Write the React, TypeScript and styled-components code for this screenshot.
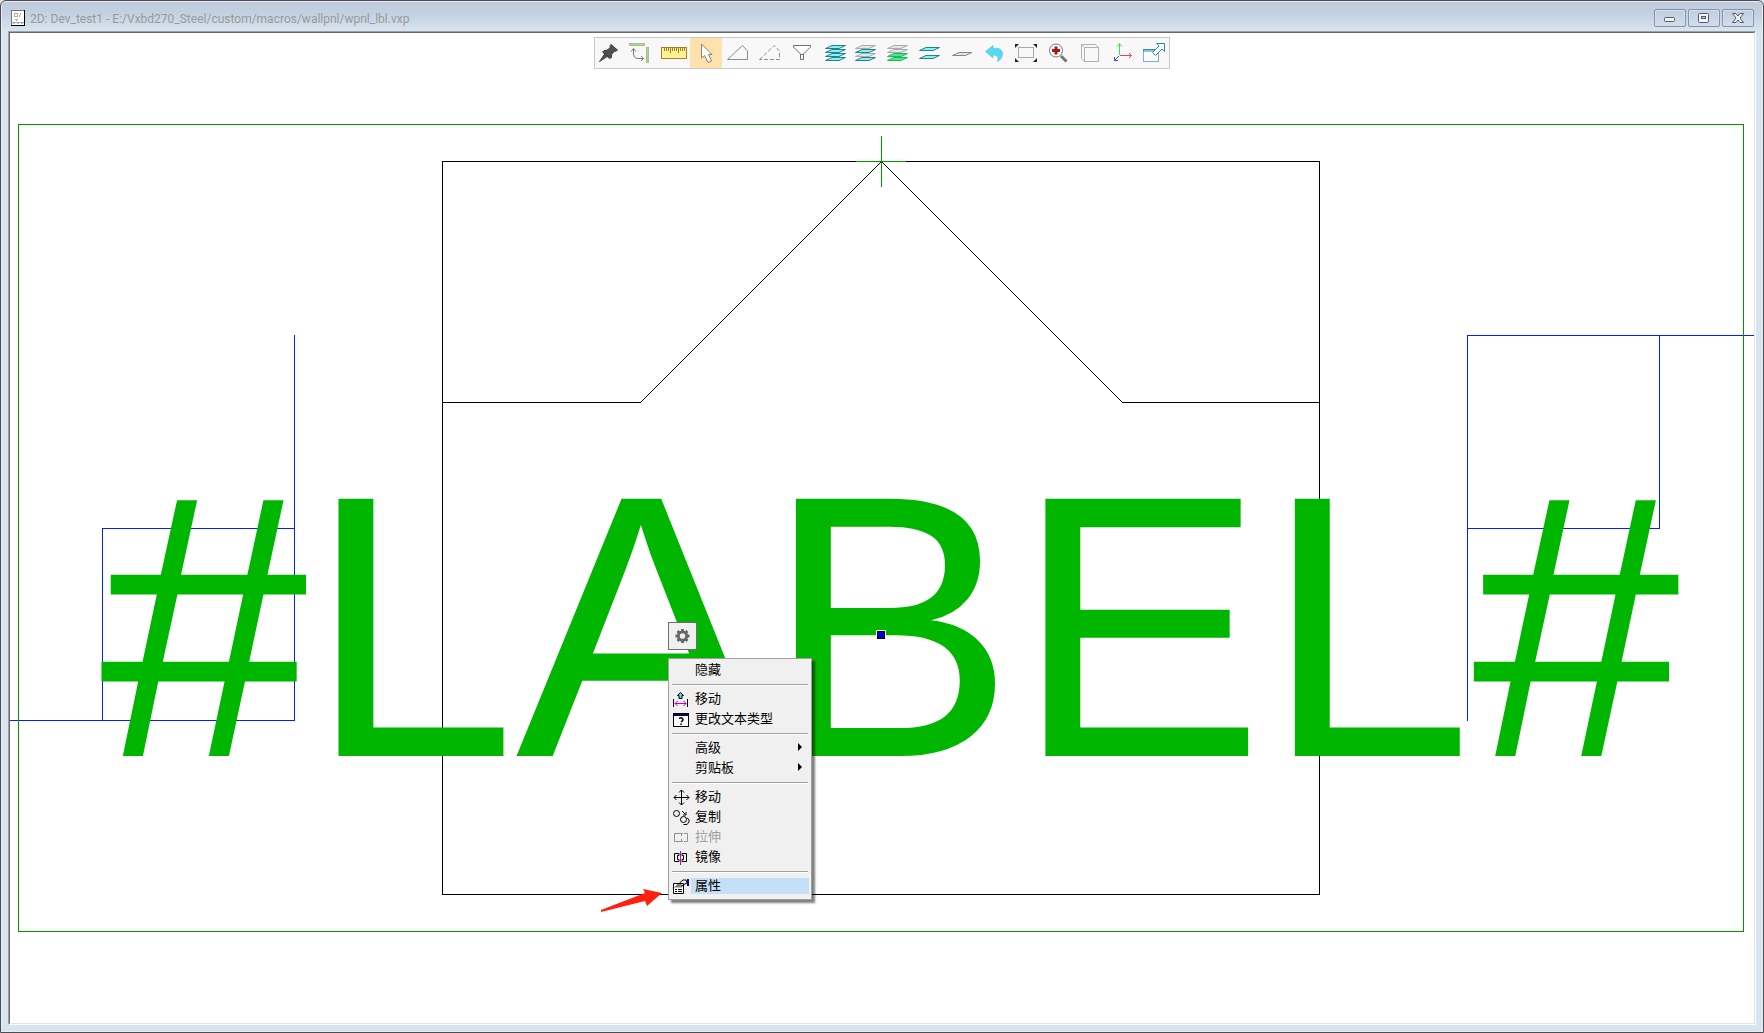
import React from "react";
import styled, { createGlobalStyle } from "styled-components";

const GlobalStyle = createGlobalStyle`
  html, body, #root { height: 100%; }
  body { margin: 0; background: #d7e4f2; font-family: Roboto, "Noto Sans CJK SC", sans-serif; }
  *, *::before, *::after { box-sizing: border-box; }
  button { margin: 0; padding: 0; border: 0; background: none; font: inherit; color: inherit; }
  svg { display: block; }
`;

const Window = styled.main`
  display: flex;
  flex-direction: column;
  height: 100vh;
  padding: 0 7px 7px;
  border: 1px solid #4f4c51;
  border-radius: 6px 6px 0 0;
  background: linear-gradient(#bfcbdb 0, #c3d0df 12px, #d7e4f2 30px);
  box-shadow: inset 0 0 0 1px #e6edf6;
  overflow: hidden;
`;

const TitleBar = styled.header`
  display: flex;
  align-items: center;
  flex: none;
  height: 30px;
  padding: 4px 2px 0 3px;
`;

const Title = styled.h1`
  flex: 1;
  margin: 0;
  padding: 2px 0 0 4px;
  font-size: 12px;
  line-height: 16px;
  font-weight: 400;
  color: #999;
  white-space: nowrap;
`;

const WindowButtons = styled.div`
  display: flex;
  gap: 2px;
`;

const WindowButton = styled.button`
  display: grid;
  place-items: center;
  width: 32px;
  height: 18px;
  border: 1px solid #8494ae;
  border-radius: 2px;
  box-shadow: inset 0 0 0 1px #d3deeb;
`;

const Viewport = styled.section`
  position: relative;
  flex: 1;
  min-height: 0;
  background: #fff;
  border: 1px solid;
  border-color: #a0a0a0 #fff #fff #a0a0a0;
`;

const Bevel = styled.div`
  height: 100%;
  border: 1px solid;
  border-color: #696969 #e3e3e3 #e3e3e3 #696969;
`;

const Drawing = styled.svg`
  width: 100%;
  height: 100%;
`;

const Toolbar = styled.div`
  position: absolute;
  top: 5px;
  left: 50%;
  transform: translateX(-50%);
  display: flex;
  height: 32px;
  border: solid #c8c8c8;
  border-width: 1px 0;
  background: #f8f8f8;
  box-shadow: inset 1px 0 #c8c8c8, inset -1px 0 #c8c8c8;
`;

const Tool = styled.button<{ $active?: boolean }>`
  width: 32px;
  height: 30px;
  background: ${(p) => (p.$active ? "#ffe2ab" : "transparent")};
`;

const Popup = styled.div`
  position: absolute;
  top: 590px;
  left: calc(50% - 214px);
  display: flex;
  flex-direction: column;
  align-items: flex-start;
  gap: 8px;
`;

const GearButton = styled.button`
  display: grid;
  place-items: center;
  width: 29px;
  height: 28px;
  border: 1px solid #6e6e6e;
  background: #f0f0f0;
`;

const Menu = styled.div`
  display: flex;
  flex-direction: column;
  width: 144px;
  padding: 1px 2px 3px;
  border: 1px solid #a0a0a0;
  background: #f0f0f0;
  box-shadow: 3px 3px 2px rgba(0, 0, 0, 0.5);
`;

const MenuItem = styled.button`
  display: flex;
  align-items: center;
  height: 20px;
  padding-left: 2px;
  font-family: "Noto Sans CJK SC", sans-serif;
  font-size: 13px;
  line-height: 14px;
  text-align: left;
  color: #000;
  &:disabled { color: #a0a0a0; }
`;

const IconSlot = styled.span`
  flex: none;
  width: 18px;
  height: 16px;
`;

const Label = styled.span<{ $active?: boolean }>`
  display: flex;
  align-items: center;
  justify-content: space-between;
  flex: 1;
  height: 16px;
  padding: 0 7px 2px 4px;
  background: ${(p) => (p.$active ? "#c5dff7" : "transparent")};
`;

const Separator = styled.hr`
  width: 136px;
  height: 2px;
  margin: 4px 1px 3px;
  border: solid;
  border-width: 1px 0;
  border-color: #a0a0a0 transparent #fff;
`;

type SheetTone = "cyan" | "gray" | "green";
const tones: Record<SheetTone, [string, string]> = {
  cyan: ["#8ff0f4", "#21838c"],
  gray: ["#e6e6ea", "#aaaab0"],
  green: ["#4be890", "#20b45c"],
};

const Sheets = ({ list, x = 5 }: { list: [number, SheetTone][]; x?: number }) => (
  <>
    {list.map(([y, tone]) => (
      <path
        key={y}
        d={`M${x + 7} ${y + 0.5}H${x + 20.5}L${x + 14} ${y + 3.5}H${x + 0.5}Z`}
        fill={tones[tone][0]}
        stroke={tones[tone][1]}
      />
    ))}
  </>
);

const tools: { name: string; active?: boolean; art: React.ReactNode }[] = [
  {
    name: "固定",
    art: (
      <g fill="#505050" stroke="#404040" strokeLinejoin="round">
        <path d="M17 6.500 23.500 12 21.500 13.500 20.500 13 17.500 16.500 17.500 19.500 15.500 20.500 8.500 14 10 12.500 13.500 12 16.500 9 16 7.500Z" />
        <path d="M11 15.500 14 18 5.500 23.500Z" />
      </g>
    ),
  },
  {
    name: "正交",
    art: (
      <g fill="none" stroke="#777">
        <rect x="3.500" y="5.500" width="15" height="2" fill="#8cf04c" stroke="#b4b4b4" />
        <rect x="20.500" y="9.500" width="2" height="15" fill="#8cf04c" stroke="#b4b4b4" />
        <path d="M7.500 11V16Q8 20.500 12 20.500H17M5 13.500 7.500 10.500 10 13.500M15 18 17.500 20.500 15 23" />
      </g>
    ),
  },
  {
    name: "测量",
    art: (
      <g>
        <rect x="3.500" y="9.500" width="25" height="11" fill="#fff391" stroke="#a87c30" />
        <path d="M6.500 10v3M8.500 10v3M10.500 10v3M12.500 10v5M14.500 10v3M16.500 10v3M18.500 10v3M20.500 10v5M22.500 10v3M24.500 10v3M26.500 10v3" stroke="#a87c30" />
      </g>
    ),
  },
  {
    name: "选择",
    active: true,
    art: <path d="M11.500 6V20L14.500 17.500 18 24.500 21.500 23 18.500 16.500H22Z" fill="#fff" stroke="#8a8078" />,
  },
  { name: "多边形", art: <path d="M5.500 21.500 20.500 7.500 25.500 13V21.500Z" fill="none" stroke="#8c8c8c" /> },
  {
    name: "虚线多边形",
    art: <path d="M5.500 21.500 20.500 7.500 25.500 13V21.500Z" fill="none" stroke="#8c8c8c" strokeDasharray="4 2" />,
  },
  {
    name: "过滤",
    art: <path d="M7.500 7.500H24.500V9L17.500 16V21.500H14.500V16L7.500 9ZM14.500 16.500H17.500" fill="#fff" stroke="#707070" />,
  },
  { name: "全部图层", art: <Sheets x={7} list={[[19, "cyan"], [15, "cyan"], [11, "cyan"], [7, "cyan"]]} /> },
  { name: "间隔图层", art: <Sheets list={[[19, "cyan"], [15, "gray"], [11, "cyan"], [7, "gray"]]} /> },
  { name: "底部图层", art: <Sheets list={[[19, "green"], [15, "green"], [11, "gray"], [7, "gray"]]} /> },
  { name: "两个图层", art: <Sheets list={[[17, "cyan"], [9, "cyan"]]} /> },
  {
    name: "单个图层",
    art: <path d="M13 14.500H26L19.500 17.500H6.500Z" fill="#e4e2e8" stroke="#888" />,
  },
  {
    name: "撤销",
    art: (
      <path d="M7.500 13.500 15 7.500V10.500C22 9.500 25 12.500 24.500 16.500 24 20 22 22.500 19.500 23.500 21 20 20 17 15 17V20Z" fill="#4fdcf0" stroke="#8cc4e0" />
    ),
  },
  {
    name: "缩放到全部",
    art: (
      <g>
        <rect x="8.500" y="9.500" width="15" height="10" fill="none" stroke="#a8a8b0" />
        <path d="M5 6h4l-4 4zM27 6h-4l4 4zM5 24h4l-4-4zM27 24h-4l4-4z" fill="#222" />
      </g>
    ),
  },
  {
    name: "放大",
    art: (
      <g fill="none">
        <path d="M19 18 24.500 23.500" stroke="#777" strokeWidth="3" />
        <circle cx="14" cy="12.500" r="6.500" fill="#fff" stroke="#777" />
        <path d="M14 8.500V16.500M10 12.500H18" stroke="#a01c1c" strokeWidth="3" />
      </g>
    ),
  },
  {
    name: "视图立方体",
    art: (
      <path d="M10.500 9.500H24.500V23.500H10.500ZM7.500 6.500H21.500L24.500 9.500M7.500 6.500V20.500L10.500 23.500M7.500 6.500 10.500 9.500" fill="none" stroke="#b0b0b0" />
    ),
  },
  {
    name: "坐标轴",
    art: (
      <g fill="none">
        <path d="M13.500 17V6M11 8.500 13.500 5.500 16 8.500" stroke="#3ee04c" />
        <path d="M14 17.500H25M23 15 25.500 17.500 23 20" stroke="#f04050" />
        <path d="M13 18 8.500 22.500M8.500 19V22.500H12" stroke="#3a50f0" />
      </g>
    ),
  },
  {
    name: "弹出窗口",
    art: (
      <g fill="#fafcff" stroke="#2f84bc">
        <rect x="5.500" y="11.500" width="15" height="12" stroke="#7fb0d0" />
        <path d="M5 11.500h16M5 13h16" />
        <path d="M18.500 5.500H26.500V13.500L24 11 17.500 17.500 14.500 14.500 21 8Z" />
      </g>
    ),
  },
];

type Entry =
  | "separator"
  | { label: string; icon?: React.ReactNode; submenu?: boolean; disabled?: boolean; active?: boolean };

const entries: Entry[] = [
  { label: "隐藏" },
  "separator",
  {
    label: "移动",
    icon: (
      <g fill="none">
        <path d="M.5 8V16M14.500 8V16" stroke="#000" />
        <path d="M2 12.500H13M4.500 10 2 12.500 4.500 15M10.500 10 13 12.500 10.500 15" stroke="#c000c0" />
        <path d="M7.500 1.500 10.500 4.500H9V7.500H6V4.500H4.500Z" fill="#30e8e8" stroke="#000" />
      </g>
    ),
  },
  {
    label: "更改文本类型",
    icon: (
      <g fill="none">
        <rect x=".5" y="2.500" width="15" height="13" fill="#fff" stroke="#000" />
        <path d="M1 3.500H15" stroke="#0000b0" />
        <path d="M0 4.500H16" stroke="#000" />
        <path d="M6 7.500Q8 6 9.500 7.500T8 11M8 12.500v1.500" stroke="#000" strokeWidth="1.500" />
      </g>
    ),
  },
  "separator",
  { label: "高级", submenu: true },
  { label: "剪贴板", submenu: true },
  "separator",
  {
    label: "移动",
    icon: (
      <path d="M8.500 1V16M1 8.500H16M6 3.500 8.500 1 11 3.500M6 13.500 8.500 16 11 13.500M3.500 6 1 8.500 3.500 11M13.500 6 16 8.500 13.500 11" fill="none" stroke="#000" />
    ),
  },
  {
    label: "复制",
    icon: (
      <g fill="none" stroke="#000">
        <circle cx="3.500" cy="4.500" r="3" />
        <circle cx="10.500" cy="10.500" r="3" />
        <path d="M9 2 12.500 5.500M13 3V6H10M10.500 15.500H14L16 13V10.500L14 9" />
      </g>
    ),
  },
  {
    label: "拉伸",
    disabled: true,
    icon: (
      <path d="M10 4.500H1.500V12.500H10M8.500 4.500V7M8.500 10V12.500M11 4.500H14.500V12.500H11" fill="none" stroke="#909090" />
    ),
  },
  {
    label: "镜像",
    icon: (
      <g fill="none" stroke="#000">
        <path d="M6 4.500H1.500V12.500H6V10.500H4.500V6.500H6ZM9 4.500H13.500V12.500H9V10.500H10.500V6.500H9Z" />
        <path d="M7.500 2V16" stroke="#c000c0" />
      </g>
    ),
  },
  "separator",
  {
    label: "属性",
    active: true,
    icon: (
      <g fill="none" stroke="#000">
        <path d="M.5 5.500H10.500V15.500H.5Z" fill="#fff" />
        <path d="M2 11.500H4M5 11.500H9M2 13.500H4M5 13.500H9M2 9.500 7 4.500 10 2H13L14 5 10 7 8 9.500M4 9.500 8 5.500M6 9.500 9 6.500" />
        <path d="M15 1V8" stroke="#0000a0" strokeWidth="2" />
      </g>
    ),
  },
];

const gearTeeth = [0, 45, 90, 135, 180, 225, 270, 315];

export default function App() {
  return (
    <>
      <GlobalStyle />
      <Window>
        <TitleBar>
          <svg width="15" height="16" viewBox="0 0 15 16" shapeRendering="crispEdges" aria-hidden="true">
            <rect x=".5" y=".5" width="13" height="15" fill="#fff" stroke="#777" />
            <path d="M13.500 0V16M0 15.500H14" stroke="#000" />
            <path d="M3 3.500h4M3.500 3v4M3 6.500h4M6.500 3v4M9.500 3v2M8.500 5v2M4 9.500h3M5 10.500h1M1 12.500h12" stroke="#aaa" />
            <path d="M2 13.500h2M6 13.500h2M10 13.500h2" stroke="#bbb" />
          </svg>
          <Title>2D: Dev_test1 - E:/Vxbd270_Steel/custom/macros/wallpnl/wpnl_lbl.vxp</Title>
          <WindowButtons>
            <WindowButton aria-label="最小化">
              <svg width="12" height="10" viewBox="0 0 12 10">
                <rect x=".5" y="4.500" width="10" height="4" rx="1" fill="#f4f4f4" stroke="#55596e" />
              </svg>
            </WindowButton>
            <WindowButton aria-label="还原">
              <svg width="12" height="10" viewBox="0 0 12 10">
                <rect x=".5" y=".5" width="10" height="9" rx="1" fill="#f4f4f4" stroke="#55596e" />
                <rect x="3.500" y="3.500" width="4" height="2" fill="#b8c4d8" stroke="#55596e" />
              </svg>
            </WindowButton>
            <WindowButton aria-label="关闭">
              <svg width="12" height="10" viewBox="0 0 12 10">
                <path d="M.5 .5H4L6 3 8 .5H11.500L8 5 11.500 9.500H8L6 7 4 9.500H.5L4 5Z" fill="#f4f4f4" stroke="#55596e" />
              </svg>
            </WindowButton>
          </WindowButtons>
        </TitleBar>

        <Viewport>
          <Bevel>
            <Drawing viewBox="10 33 1744 990" preserveAspectRatio="xMidYMid slice">
              <g fill="none" shapeRendering="crispEdges">
                <path d="M442.500 161.500H1319.500V894.500H442.500Z" stroke="#000" />
                <path d="M442.500 402.500H640.500L881.500 161.500 1122.500 402.500H1319.500" stroke="#000" />
                <path d="M294.500 335V720.500H10M102.500 720V528.500H294" stroke="#0020ff" />
                <path d="M1467.500 721V335.500H1754M1659.500 336V528.500H1468" stroke="#0020ff" />
                <path d="M18.500 124.500H1743.500V931.500H18.500Z" stroke="#009600" />
                <path d="M856 161.500H906M881.500 136V187" stroke="#009600" />
              </g>
              <text
                x="890"
                y="756"
                textAnchor="middle"
                fontFamily="'Liberation Sans', Arial, sans-serif"
                fontSize="374"
                fill="#00b600"
              >
                #LABEL#
              </text>
              <rect x="876" y="630" width="10" height="10" fill="#fff" />
              <rect x="877.500" y="631.500" width="7" height="7" fill="#0000c8" stroke="#000" />
              <path d="M601 910 645 893 643 889 662 893 647 906 645 901 601 912Z" fill="#ff2010" />
            </Drawing>
          </Bevel>

          <Toolbar role="toolbar" aria-label="视图工具">
            {tools.map((t) => (
              <Tool key={t.name} $active={t.active} aria-label={t.name} aria-pressed={!!t.active}>
                <svg width="32" height="30" viewBox="0 0 32 30">{t.art}</svg>
              </Tool>
            ))}
          </Toolbar>

          <Popup>
            <GearButton aria-label="设置">
              <svg width="15" height="16" viewBox="-8 -8 16 16">
                {gearTeeth.map((a) => (
                  <rect key={a} x="-1.500" y="-7.500" width="3" height="4" fill="#666" transform={`rotate(${a})`} />
                ))}
                <circle r="4.500" fill="none" stroke="#666" strokeWidth="3" />
              </svg>
            </GearButton>
            <Menu role="menu">
              {entries.map((e, i) =>
                e === "separator" ? (
                  <Separator key={i} />
                ) : (
                  <MenuItem key={i} role="menuitem" disabled={e.disabled}>
                    <IconSlot>
                      {e.icon && <svg width="17" height="17" viewBox="0 0 17 17">{e.icon}</svg>}
                    </IconSlot>
                    <Label $active={e.active}>
                      {e.label}
                      {e.submenu && (
                        <svg width="4" height="8" viewBox="0 0 4 8">
                          <path d="M0 0 4 4 0 8Z" />
                        </svg>
                      )}
                    </Label>
                  </MenuItem>
                )
              )}
            </Menu>
          </Popup>
        </Viewport>
      </Window>
    </>
  );
}
